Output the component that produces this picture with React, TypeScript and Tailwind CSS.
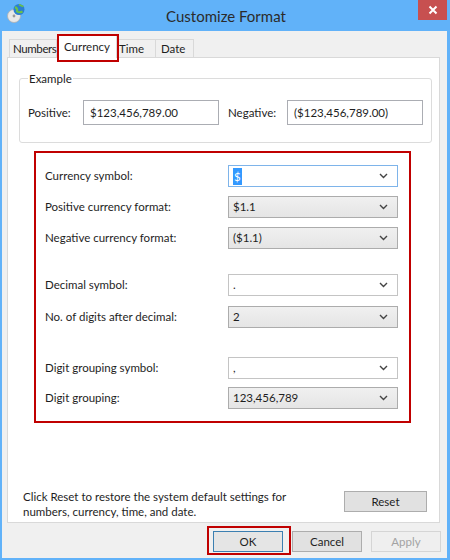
import React from "react";

const font = { fontFamily: 'Lato, "Noto Sans", sans-serif' };

function Chevron() {
  return (
    <svg width="9" height="6" viewBox="0 0 9 6" className="shrink-0">
      <path d="M1 1 L4.5 4.5 L8 1" fill="none" stroke="#444" strokeWidth="1.4" />
    </svg>
  );
}

function Combo({ value, editable, focused, selected }: { value: string; editable?: boolean; focused?: boolean; selected?: boolean }) {
  const cls = editable
    ? focused
      ? "bg-white border-[#7eb4ea]"
      : "bg-white border-[#c4c4c4]"
    : "bg-gradient-to-b from-[#f0f0f0] to-[#e5e5e5] border-[#acacac]";
  return (
    <div className={`w-[170px] h-[22px] border ${cls} flex items-center pl-[4px] pr-[9px] justify-between`}>
      {selected ? (
        <span className="bg-[#3399ff] text-white px-[1px] leading-[17px]">{value}</span>
      ) : (
        <span className="text-[#1e1e1e]">{value}</span>
      )}
      <Chevron />
    </div>
  );
}

function Row({ label, children, mt }: { label: string; children: React.ReactNode; mt: string }) {
  return (
    <div className={`flex items-center h-[22px] ${mt}`}>
      <div className="w-[183px] text-[#1e1e1e]">{label}</div>
      {children}
    </div>
  );
}

function Btn({ children, variant }: { children: React.ReactNode; variant?: "default" | "disabled" }) {
  const cls =
    variant === "default"
      ? "bg-[#e5e5e5] border-[#3c7fb1] text-[#1e1e1e]"
      : variant === "disabled"
      ? "bg-[#efefef] border-[#d5d5d5] text-[#a3a3a3]"
      : "bg-[#e1e1e1] border-[#adadad] text-[#1e1e1e]";
  return <div className={`w-[70px] h-[21px] border ${cls} flex items-center justify-center`}>{children}</div>;
}

export default function App() {
  return (
    <div className="w-[450px] h-[560px] bg-[#61b2f9] flex flex-col relative text-[11.5px]" style={font}>
      {/* Title bar */}
      <div className="h-[31px] flex items-start shrink-0">
        <div className="ml-[6px] mt-[3px] w-[20px] h-[20px]">
          <svg width="20" height="20" viewBox="0 0 20 20">
            <circle cx="8" cy="13" r="6.5" fill="#e8e8e8" stroke="#b0b0b0" strokeWidth="0.8" />
            <circle cx="8" cy="13" r="1.4" fill="#9a9a9a" />
            <circle cx="13" cy="6.5" r="5.5" fill="#2a7fd4" />
            <path d="M9 4 Q12 5.5 11 8.5 Q13.5 10 16.5 8.5" fill="none" stroke="#6cc24a" strokeWidth="2" />
            <path d="M13 1.5 Q15.5 3 17.5 3.5" fill="none" stroke="#6cc24a" strokeWidth="1.6" />
          </svg>
        </div>
        <div className="flex-1 text-center mt-[5px] text-[15px] text-[#2b2b2b] pl-[8px]">Customize Format</div>
        <div className="w-[29px] h-[20px] bg-[#c75050] mr-[3px] flex items-center justify-center">
          <svg width="10" height="10" viewBox="0 0 10 10">
            <path d="M1.5 1.5 L8.5 8.5 M8.5 1.5 L1.5 8.5" stroke="white" strokeWidth="2" />
          </svg>
        </div>
      </div>

      {/* Client area */}
      <div className="flex-1 ml-[2px] mr-[3px] mb-[2px] bg-[#f0f0f0] flex flex-col pl-[5px]">
        {/* Tabs */}
        <div className="h-[26px] flex items-end pl-[2px] shrink-0 whitespace-nowrap">
          <div className="w-[48px] h-[18px] border border-b-0 border-[#d9d9d9] bg-[#f0f0f0] flex items-center pl-[3px] tracking-[-0.4px] text-[#1e1e1e]">Numbers</div>
          <div className="w-[60px] h-[23px] border border-b-0 border-[#d9d9d9] bg-white flex items-start pt-[2px] justify-center text-[#1e1e1e] relative z-10 -mb-px">Currency</div>
          <div className="w-[39px] h-[18px] border border-b-0 border-l-0 border-[#d9d9d9] bg-[#f0f0f0] flex items-center pl-[2px] text-[#1e1e1e]">Time</div>
          <div className="w-[38px] h-[18px] border border-b-0 border-l-0 border-[#d9d9d9] bg-[#f0f0f0] flex items-center pl-[5px] text-[#1e1e1e]">Date</div>
        </div>

        {/* Panel */}
        <div className="w-[433px] h-[466px] bg-white border border-[#d9d9d9] flex flex-col shrink-0">
          <fieldset className="ml-[11px] mr-[9px] mt-[13px] border border-[#dcdcdc] rounded-[3px] h-[72px] px-[8px]">
            <legend className="text-[#1e1e1e] px-[1px] leading-[15px]">Example</legend>
            <div className="flex items-center mt-[14px]">
              <div className="w-[55px] text-[#1e1e1e]">Positive:</div>
              <div className="w-[136px] h-[25px] border border-[#abadb3] flex items-center pl-[6px] text-[#1e1e1e]">$123,456,789.00</div>
              <div className="w-[59px] ml-[9px] text-[#1e1e1e]">Negative:</div>
              <div className="w-[136px] h-[25px] border border-[#abadb3] flex items-center pl-[6px] text-[#1e1e1e]">($123,456,789.00)</div>
            </div>
          </fieldset>

          <div className="ml-[26px] w-[377px] mt-[8px] border-2 border-[#c00000] pl-[9px] pt-[12px] pb-[12px]">
            <Row label="Currency symbol:" mt="">
              <Combo value="$" editable focused selected />
            </Row>
            <Row label="Positive currency format:" mt="mt-[9px]">
              <Combo value="$1.1" />
            </Row>
            <Row label="Negative currency format:" mt="mt-[9px]">
              <Combo value="($1.1)" />
            </Row>
            <Row label="Decimal symbol:" mt="mt-[25px]">
              <Combo value="." editable />
            </Row>
            <Row label="No. of digits after decimal:" mt="mt-[10px]">
              <Combo value="2" />
            </Row>
            <Row label="Digit grouping symbol:" mt="mt-[29px]">
              <Combo value="," editable />
            </Row>
            <Row label="Digit grouping:" mt="mt-[8px]">
              <Combo value="123,456,789" />
            </Row>
          </div>

          <div className="mt-auto flex items-start justify-between pl-[15px] pr-[12px] pb-[3px]">
            <div className="leading-[15px] text-[#1e1e1e]">
              <div>Click Reset to restore the system default settings for</div>
              <div>numbers, currency, time, and date.</div>
            </div>
            <div className="w-[83px] h-[21px] mt-[2px] border border-[#adadad] bg-[#e1e1e1] flex items-center justify-center text-[#1e1e1e]">Reset</div>
          </div>
        </div>

        {/* Buttons */}
        <div className="flex justify-end gap-[9px] mt-[8px] pr-[6px]">
          <Btn variant="default">OK</Btn>
          <Btn>Cancel</Btn>
          <Btn variant="disabled">Apply</Btn>
        </div>
      </div>

      {/* Annotation boxes */}
      <div className="absolute left-[57px] top-[34px] w-[62px] h-[28px] border-2 border-[#c00000] z-20 pointer-events-none" />
      <div className="absolute left-[207px] top-[526px] w-[84px] h-[29px] border-2 border-[#c00000] z-20 pointer-events-none" />
    </div>
  );
}
